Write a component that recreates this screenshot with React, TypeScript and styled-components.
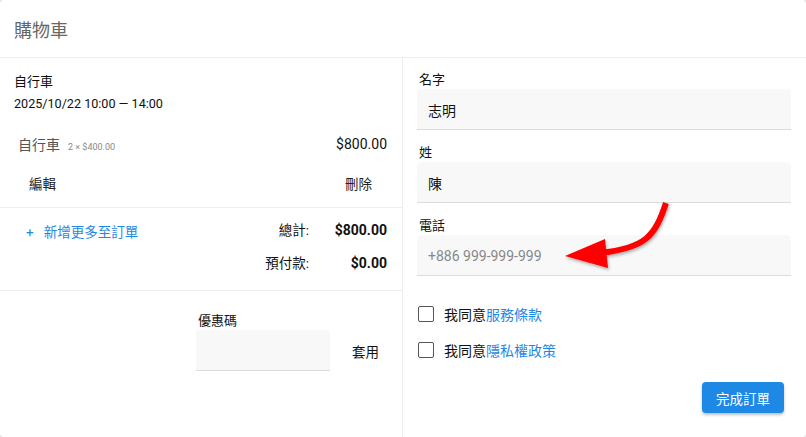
import React from "react";
import styled, { createGlobalStyle } from "styled-components";

const Global = createGlobalStyle`
  html, body { margin: 0; padding: 0; background: #e4e4e4; }
  body { font-family: Roboto, "Noto Sans CJK TC", sans-serif; color: #212121; }
  * { box-sizing: border-box; }
`;

const Card = styled.div`
  position: relative;
  width: 806px;
  height: 437px;
  background: #fff;
  border-radius: 4px;
  display: flex;
  flex-direction: column;
  overflow: hidden;
`;

const Header = styled.div`
  height: 58px;
  border-bottom: 1px solid #eeeeee;
  display: flex;
  align-items: center;
  padding-left: 14px;
  font-size: 18px;
  color: #666;
`;

const Body = styled.div`
  flex: 1;
  display: flex;
`;

const Left = styled.div`
  width: 403px;
  border-right: 1px solid #eeeeee;
  display: flex;
  flex-direction: column;
`;

const Right = styled.div`
  flex: 1;
  padding: 10px 15px 0 14px;
  display: flex;
  flex-direction: column;
`;

const Booking = styled.div`
  padding: 13px 15px 0 14px;
  border-bottom: 1px solid #eeeeee;
  height: 150px;
`;

const Line = styled.div<{ $small?: boolean }>`
  font-size: ${(p) => (p.$small ? "12.6px" : "13px")};
  line-height: 22px;
  color: #111;
`;

const ItemRow = styled.div`
  display: flex;
  align-items: center;
  justify-content: space-between;
  margin-top: 15px;
  padding-left: 4px;
  height: 28px;
`;

const ItemName = styled.span`
  font-size: 14px;
  color: #555;
`;

const ItemQty = styled.span`
  font-size: 9px;
  color: #888;
  margin-left: 8px;
`;

const Money = styled.span`
  font-size: 14px;
  color: #111;
`;

const Actions = styled.div`
  display: flex;
  justify-content: space-between;
  padding: 0 15px 0 15px;
  margin-top: 16px;
  font-size: 13.5px;
  line-height: 20px;
  color: #222;
`;

const Totals = styled.div`
  height: 83px;
  border-bottom: 1px solid #eeeeee;
  display: flex;
  justify-content: space-between;
  padding: 13px 15px 0 26px;
`;

const AddMore = styled.div`
  font-size: 13.5px;
  color: #1e88e5;
  line-height: 22px;
  display: flex;
  gap: 10px;
`;

const SumGrid = styled.div`
  display: grid;
  grid-template-columns: auto 78px;
  row-gap: 11px;
  margin-top: -2px;
  align-items: center;
  align-content: start;
`;

const SumLabel = styled.span`
  font-size: 13.5px;
  line-height: 22px;
  text-align: right;
  color: #111;
`;

const SumValue = styled.span`
  font-size: 14px;
  font-weight: 700;
  text-align: right;
  color: #111;
`;

const Coupon = styled.div`
  display: flex;
  align-items: flex-end;
  padding: 18px 0 0 196px;
`;

const CouponField = styled.div`
  display: flex;
  flex-direction: column;
`;

const SmallLabel = styled.label`
  font-size: 13px;
  line-height: 20px;
  padding-top: 2px;
  color: #111;
  padding-left: 2px;
`;

const Input = styled.div<{ $w?: number; $placeholder?: boolean }>`
  width: ${(p) => (p.$w ? `${p.$w}px` : "100%")};
  height: 40px;
  background: #f8f8f8;
  border-bottom: 1px solid #dcdcdc;
  border-radius: 4px 4px 0 0;
  box-shadow: 0 -1px 1px rgba(0, 0, 0, 0.03);
  padding-left: 11px;
  display: flex;
  align-items: center;
  font-size: 14px;
  color: ${(p) => (p.$placeholder ? "#888" : "#111")};
`;

const ApplyButton = styled.div`
  font-size: 13.5px;
  color: #111;
  height: 40px;
  display: flex;
  align-items: center;
  margin-left: 22px;
`;

const Field = styled.div`
  display: flex;
  flex-direction: column;
  margin-bottom: 11px;
`;

const CheckRow = styled.div`
  display: flex;
  align-items: center;
  height: 36px;
  font-size: 14px;
  color: #111;
`;

const Box = styled.span`
  width: 16px;
  height: 16px;
  border: 1.5px solid #555;
  border-radius: 2px;
  margin: 0 10px 0 1px;
`;

const Link = styled.span`
  color: #1e88e5;
`;

const Checks = styled.div`
  margin-top: 9px;
`;

const SubmitRow = styled.div`
  display: flex;
  justify-content: flex-end;
  margin-top: 14px;
  padding-right: 7px;
`;

const Submit = styled.button`
  width: 82px;
  height: 31px;
  border: none;
  border-radius: 4px;
  background: #1e88e5;
  color: #fff;
  font-family: inherit;
  font-size: 13.5px;
  box-shadow: 0 2px 3px rgba(0, 0, 0, 0.25);
`;

const Arrow = styled.svg`
  position: absolute;
  left: 0;
  top: 0;
  pointer-events: none;
`;

export default function App() {
  return (
    <>
      <Global />
      <Card>
        <Header>購物車</Header>
        <Body>
          <Left>
            <Booking>
              <Line>自行車</Line>
              <Line $small>2025/10/22 10:00 — 14:00</Line>
              <ItemRow>
                <span>
                  <ItemName>自行車</ItemName>
                  <ItemQty>2 × $400.00</ItemQty>
                </span>
                <Money>$800.00</Money>
              </ItemRow>
              <Actions>
                <span>編輯</span>
                <span>刪除</span>
              </Actions>
            </Booking>
            <Totals>
              <AddMore>
                <span>+</span>
                <span>新增更多至訂單</span>
              </AddMore>
              <SumGrid>
                <SumLabel>總計:</SumLabel>
                <SumValue>$800.00</SumValue>
                <SumLabel>預付款:</SumLabel>
                <SumValue>$0.00</SumValue>
              </SumGrid>
            </Totals>
            <Coupon>
              <CouponField>
                <SmallLabel>優惠碼</SmallLabel>
                <Input $w={134} />
              </CouponField>
              <ApplyButton>套用</ApplyButton>
            </Coupon>
          </Left>
          <Right>
            <Field>
              <SmallLabel>名字</SmallLabel>
              <Input>志明</Input>
            </Field>
            <Field>
              <SmallLabel>姓</SmallLabel>
              <Input>陳</Input>
            </Field>
            <Field>
              <SmallLabel>電話</SmallLabel>
              <Input $placeholder>+886 999-999-999</Input>
            </Field>
            <Checks>
              <CheckRow>
                <Box />
                我同意<Link>服務條款</Link>
              </CheckRow>
              <CheckRow>
                <Box />
                我同意<Link>隱私權政策</Link>
              </CheckRow>
            </Checks>
            <SubmitRow>
              <Submit>完成訂單</Submit>
            </SubmitRow>
          </Right>
        </Body>
        <Arrow width="806" height="437" viewBox="0 0 806 437">
          <defs>
            <filter id="sh" x="-20%" y="-20%" width="140%" height="140%">
              <feDropShadow dx="1" dy="2" stdDeviation="1.5" floodColor="#000" floodOpacity="0.3" />
            </filter>
          </defs>
          <g filter="url(#sh)">
            <path d="M666 203 C 655 236, 646 248, 600 253" stroke="#ff0000" strokeWidth="6" fill="none" />
            <polygon points="565,256 605,239 608,268" fill="#ff0000" />
          </g>
        </Arrow>
      </Card>
    </>
  );
}
